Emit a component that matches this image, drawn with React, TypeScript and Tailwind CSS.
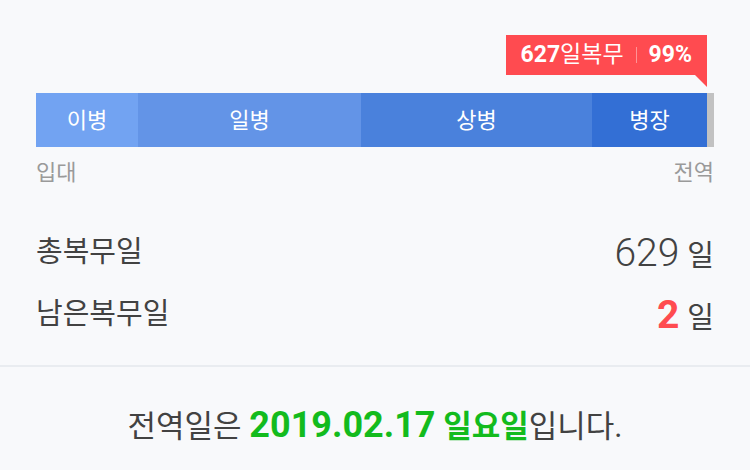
const SEGMENTS = [
  { label: '이병', width: 'w-[102px]', color: 'bg-[#72a3f2]' },
  { label: '일병', width: 'w-[223px]', color: 'bg-[#6394e7]' },
  { label: '상병', width: 'w-[231px]', color: 'bg-[#4a81dc]' },
  { label: '병장', width: 'w-[115px]', color: 'bg-[#336fd5]' },
]

export default function App() {
  return (
    <div className="w-[750px] h-[470px] bg-[#f8f9fb] text-[#424242] font-['Roboto','Noto_Sans_CJK_KR',sans-serif] overflow-hidden">
      <div className="px-9">
        {/* progress badge */}
        <div className="flex justify-end pt-[35px] pr-[7px]">
          <div className="relative h-[40px] bg-[#ff4b50] text-white flex items-center px-[15px] text-[23px]">
            <span className="font-bold">627</span>
            <span>일복무</span>
            <span className="w-px h-[16px] bg-white/40 mx-3" />
            <span className="font-bold">99%</span>
            <span className="absolute right-0 top-full w-0 h-0 border-t-[12px] border-t-[#ff4b50] border-l-[12px] border-l-transparent" />
          </div>
        </div>

        {/* service bar */}
        <div className="flex h-[54px] mt-[18px]">
          {SEGMENTS.map(s => (
            <div key={s.label} className={`${s.width} ${s.color} flex items-center justify-center text-white text-[22px]`}>
              {s.label}
            </div>
          ))}
          <div className="flex-1 bg-[#c2c2c2]" />
        </div>

        <div className="flex justify-between mt-[12px] text-[22px] leading-[28px] text-[#9a9a9a]">
          <span>입대</span>
          <span>전역</span>
        </div>

        <div className="flex items-center justify-between h-[40px] mt-[46px]">
          <span className="text-[29px]">총복무일</span>
          <span className="flex items-baseline">
            <span className="text-[39px] font-light">629</span>
            <span className="text-[29px] ml-[8px]">일</span>
          </span>
        </div>
        <div className="flex items-center justify-between h-[40px] mt-[22px]">
          <span className="text-[29px]">남은복무일</span>
          <span className="flex items-baseline">
            <span className="text-[39px] font-bold text-[#ff4b50]">2</span>
            <span className="text-[29px] ml-[8px]">일</span>
          </span>
        </div>
      </div>

      <div className="h-[2px] bg-[#e9ecf0] mt-[30px]" />

      <div className="pt-[37px] text-center text-[31px] leading-[42px]">
        전역일은{' '}
        <span className="font-bold text-[#13bb1d]">
          <span className="text-[36px]">2019.02.17</span> 일요일
        </span>
        입니다.
      </div>
    </div>
  )
}
